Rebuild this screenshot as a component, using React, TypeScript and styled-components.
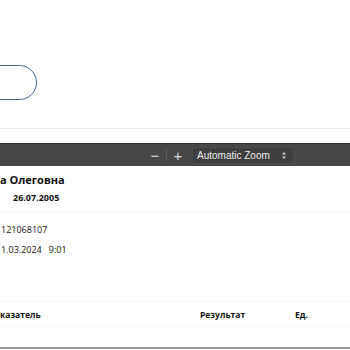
import React from 'react';
import styled, { createGlobalStyle } from 'styled-components';

const GlobalStyle = createGlobalStyle`
  html, body {
    margin: 0;
    padding: 0;
    background: #fff;
  }
  body {
    width: 350px;
    height: 350px;
    overflow: hidden;
    font-family: 'Open Sans', 'Noto Sans', sans-serif;
  }
`;

const Header = styled.div`
  height: 143px;
  display: flex;
  flex-direction: column;
`;

const PillButton = styled.button`
  margin-top: 65px;
  margin-left: -100px;
  width: 137px;
  height: 35px;
  border: 1.5px solid #3b679b;
  border-radius: 18px;
  background: #fff;
`;

const Divider = styled.div`
  margin-top: 28px;
  height: 1px;
  background: #ececec;
`;

const Toolbar = styled.div`
  height: 23px;
  background: #474747;
  border-top: 1px solid #2e2e2e;
  box-sizing: border-box;
  display: flex;
  align-items: center;
  padding-left: 149px;
  color: #e6e6e6;
`;

const ZoomBtn = styled.span`
  width: 12px;
  font-family: 'Liberation Sans', sans-serif;
  font-size: 15px;
  line-height: 1;
  text-align: center;
  color: #dcdcdc;
`;

const ToolSep = styled.span`
  width: 1px;
  height: 12px;
  margin: 0 5px;
  background: #5a5a5a;
`;

const ZoomSelect = styled.div`
  margin-left: 8px;
  width: 102px;
  height: 17px;
  box-sizing: border-box;
  background: #3e3e3e;
  border: 1px solid #4a4a4a;
  display: flex;
  align-items: center;
  justify-content: space-between;
  padding: 0 7px 0 4px;
  font-family: 'Liberation Sans', sans-serif;
  font-size: 10px;
  color: #ececec;
`;

const Arrows = () => (
  <svg width="4" height="7" viewBox="0 0 4 7">
    <path d="M2 0 L4 2.5 L0 2.5 Z M2 7 L4 4.5 L0 4.5 Z" fill="#d0d0d0" />
  </svg>
);

const Page = styled.div`
  font-family: 'Open Sans', 'Noto Sans', sans-serif;
  color: #111;
`;

const Name = styled.div`
  margin-top: 6px;
  font-size: 11px;
  font-weight: 700;
  line-height: 16px;
`;

const BirthDate = styled.div`
  margin-top: 3px;
  padding-left: 13px;
  font-size: 9px;
  font-weight: 700;
  line-height: 14px;
  padding-bottom: 6px;
  border-bottom: 1px solid #f6f6f6;
`;

const InfoLine = styled.div<{ $top: number }>`
  margin-top: ${(p) => p.$top}px;
  padding-left: 1px;
  font-size: 9px;
  line-height: 14px;
  white-space: pre;
`;

const TableHead = styled.div`
  margin-top: 44px;
  height: 24px;
  display: grid;
  grid-template-columns: 200px 95px 1fr;
  align-items: center;
  font-size: 8.5px;
  font-weight: 700;
  border-top: 1px solid #f7f7f7;
  border-bottom: 1px solid #f7f7f7;
`;

const BottomRule = styled.div`
  margin-top: 20px;
  height: 2px;
  background: #9a9a9a;
`;

export default function App() {
  return (
    <>
      <GlobalStyle />
      <Header>
        <PillButton aria-label="button" />
        <Divider />
      </Header>
      <Toolbar>
        <ZoomBtn>−</ZoomBtn>
        <ToolSep />
        <ZoomBtn>+</ZoomBtn>
        <ZoomSelect>
          <span>Automatic Zoom</span>
          <Arrows />
        </ZoomSelect>
      </Toolbar>
      <Page>
        <Name>а Олеговна</Name>
        <BirthDate>26.07.2005</BirthDate>
        <InfoLine $top={11}>121068107</InfoLine>
        <InfoLine $top={6}>{'1.03.2024   9:01'}</InfoLine>
        <TableHead>
          <span>казатель</span>
          <span>Результат</span>
          <span>Ед.</span>
        </TableHead>
        <BottomRule />
      </Page>
    </>
  );
}
